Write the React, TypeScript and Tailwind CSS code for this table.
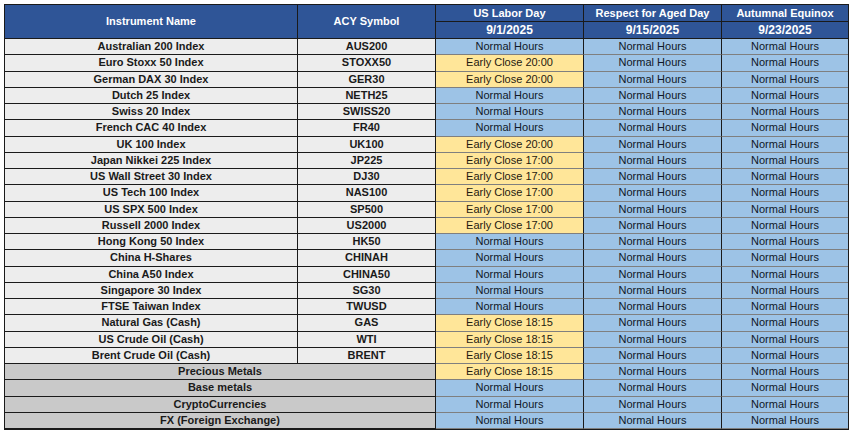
import React from 'react';

type Status = 'N' | 'E20' | 'E17' | 'E18';

interface Row {
  name: string;
  symbol?: string;
  labor: Status;
  group?: boolean;
}

const ROWS: Row[] = [
  { name: 'Australian 200 Index', symbol: 'AUS200', labor: 'N' },
  { name: 'Euro Stoxx 50 Index', symbol: 'STOXX50', labor: 'E20' },
  { name: 'German DAX 30 Index', symbol: 'GER30', labor: 'E20' },
  { name: 'Dutch 25 Index', symbol: 'NETH25', labor: 'N' },
  { name: 'Swiss 20 Index', symbol: 'SWISS20', labor: 'N' },
  { name: 'French CAC 40 Index', symbol: 'FR40', labor: 'N' },
  { name: 'UK 100 Index', symbol: 'UK100', labor: 'E20' },
  { name: 'Japan Nikkei 225 Index', symbol: 'JP225', labor: 'E17' },
  { name: 'US Wall Street 30 Index', symbol: 'DJ30', labor: 'E17' },
  { name: 'US Tech 100 Index', symbol: 'NAS100', labor: 'E17' },
  { name: 'US SPX 500 Index', symbol: 'SP500', labor: 'E17' },
  { name: 'Russell 2000 Index', symbol: 'US2000', labor: 'E17' },
  { name: 'Hong Kong 50 Index', symbol: 'HK50', labor: 'N' },
  { name: 'China H-Shares', symbol: 'CHINAH', labor: 'N' },
  { name: 'China A50 Index', symbol: 'CHINA50', labor: 'N' },
  { name: 'Singapore 30 Index', symbol: 'SG30', labor: 'N' },
  { name: 'FTSE Taiwan Index', symbol: 'TWUSD', labor: 'N' },
  { name: 'Natural Gas (Cash)', symbol: 'GAS', labor: 'E18' },
  { name: 'US Crude Oil (Cash)', symbol: 'WTI', labor: 'E18' },
  { name: 'Brent Crude Oil (Cash)', symbol: 'BRENT', labor: 'E18' },
  { name: 'Precious Metals', labor: 'E18', group: true },
  { name: 'Base metals', labor: 'N', group: true },
  { name: 'CryptoCurrencies', labor: 'N', group: true },
  { name: 'FX (Foreign Exchange)', labor: 'N', group: true },
];

const LABEL: Record<Status, string> = {
  N: 'Normal Hours',
  E20: 'Early Close 20:00',
  E17: 'Early Close 17:00',
  E18: 'Early Close 18:15',
};

const StatusCell = ({ s, last }: { s: Status; last?: boolean }) => (
  <div
    className={`flex items-center justify-center border-b border-[#7f7f7f] ${
      last ? '' : 'border-r border-r-[#1a1a1a]'
    } ${s === 'N' ? 'bg-[#9dc3e6] text-[#111827]' : 'bg-[#ffe699] text-[#1f1a10]'}`}
  >
    {LABEL[s]}
  </div>
);

const App: React.FC = () => {
  return (
    <div className="w-[853px] h-[432px] bg-white pt-[4px] pl-[4px] font-['Liberation_Sans',Arial,sans-serif] text-[11px] leading-none">
      <div className="w-[845px] border border-[#1a1a1a]">
        {/* Header */}
        <div className="grid grid-cols-[293px_138px_148px_138px_126px] grid-rows-[17px_16px] bg-[#2f5597] text-white font-bold border-b border-[#1a1a1a]">
          <div className="row-span-2 flex items-center justify-center border-r border-[#1a1a1a]">
            Instrument Name
          </div>
          <div className="row-span-2 flex items-center justify-center border-r border-[#1a1a1a]">
            ACY Symbol
          </div>
          <div className="flex items-center justify-center border-r border-b border-[#1a1a1a]">
            US Labor Day
          </div>
          <div className="flex items-center justify-center border-r border-b border-[#1a1a1a]">
            Respect for Aged Day
          </div>
          <div className="flex items-center justify-center border-b border-[#1a1a1a]">
            Autumnal Equinox
          </div>
          <div className="flex items-center justify-center border-r border-[#1a1a1a] text-[12px]">9/1/2025</div>
          <div className="flex items-center justify-center border-r border-[#1a1a1a] text-[12px]">9/15/2025</div>
          <div className="flex items-center justify-center text-[12px]">9/23/2025</div>
        </div>

        {/* Body */}
        <div className="grid grid-cols-[293px_138px_148px_138px_126px] auto-rows-[16.25px]">
          {ROWS.map((r) => (
            <React.Fragment key={r.name}>
              {r.group ? (
                <div className="col-span-2 flex items-center justify-center bg-[#c9c9c9] font-bold text-[#1a1a1a] border-b border-r border-[#1a1a1a]">
                  {r.name}
                </div>
              ) : (
                <>
                  <div className="flex items-center justify-center bg-[#ededed] font-bold text-[#1a1a1a] border-b border-r border-[#1a1a1a]">
                    {r.name}
                  </div>
                  <div className="flex items-center justify-center bg-[#ededed] font-bold text-[#1a1a1a] border-b border-r border-[#1a1a1a]">
                    {r.symbol}
                  </div>
                </>
              )}
              <StatusCell s={r.labor} />
              <StatusCell s="N" />
              <StatusCell s="N" last />
            </React.Fragment>
          ))}
        </div>
      </div>
    </div>
  );
};

export default App;
